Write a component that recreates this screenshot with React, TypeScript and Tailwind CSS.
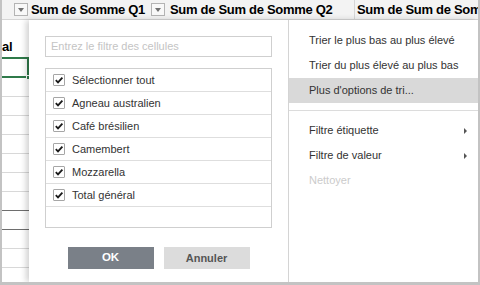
import React from "react";

function Dropdown() {
  return (
    <div className="w-[14px] h-[13px] shrink-0 border border-[#b4b4b4] bg-[#f8f8f8] flex items-center justify-center">
      <div className="w-0 h-0 border-l-[3.5px] border-r-[3.5px] border-t-[4px] border-l-transparent border-r-transparent border-t-[#707070]" />
    </div>
  );
}

function Check() {
  return (
    <div className="w-[12px] h-[12px] shrink-0 border border-[#a6a6a6] rounded-[1px] bg-white flex items-center justify-center">
      <svg width="10" height="10" viewBox="0 0 10 10">
        <path d="M1.8 5.2 L4 7.4 L8.4 2.6" fill="none" stroke="#1a1a1a" strokeWidth="1.8" />
      </svg>
    </div>
  );
}

function MenuItem({ label, arrow, disabled, active }: { label: string; arrow?: boolean; disabled?: boolean; active?: boolean }) {
  return (
    <div
      className={
        "h-[25px] flex items-center pl-[20px] pr-[11px] justify-between " +
        (active ? "bg-[#d9d9d9] " : "") +
        (disabled ? "text-[#cbcbcb]" : "text-[#333333]")
      }
    >
      <span>{label}</span>
      {arrow ? (
        <div className="w-0 h-0 border-t-[3px] border-b-[3px] border-l-[3px] border-t-transparent border-b-transparent border-l-[#555555]" />
      ) : null}
    </div>
  );
}

export default function App() {
  const items = [
    "Sélectionner tout",
    "Agneau australien",
    "Café brésilien",
    "Camembert",
    "Mozzarella",
    "Total général",
  ];
  const rowLines = ["light", "light", "light", "light", "light", "light", "dark", "dark", "light", "light"];
  return (
    <div className="w-[480px] h-[285px] flex flex-col bg-white border-l-2 border-r-2 border-b-[3px] border-[#c3c3c3] overflow-hidden font-['Liberation_Sans',Arial,sans-serif]">
      {/* header row */}
      <div className="h-[20px] shrink-0 flex bg-[#f3f3f3] border-b border-[#d6d6d6] text-[13px] leading-none font-bold text-black tracking-[-0.3px] whitespace-nowrap">
        <div className="w-[27px] shrink-0 flex items-center justify-end pr-[1px]">
          <Dropdown />
        </div>
        <div className="w-[138px] shrink-0 flex items-center justify-between pl-[2px] pr-[2px]">
          <span>Sum de Somme Q1</span>
          <Dropdown />
        </div>
        <div className="w-[188px] shrink-0 flex items-center pl-[3px] border-r border-[#d6d6d6]">
          <span>Sum de Sum de Somme Q2</span>
        </div>
        <div className="flex-1 min-w-0 overflow-hidden flex items-center pl-[2px]">
          <span>Sum de Sum de Somme Q3</span>
        </div>
      </div>

      {/* body */}
      <div className="flex-1 min-h-0 flex">
        {/* spreadsheet column */}
        <div className="w-[27px] shrink-0 flex flex-col">
          <div className="h-[37px] shrink-0 flex items-end pb-[4px] text-[13px] leading-none font-bold text-black tracking-[-0.3px] overflow-hidden">
            al
          </div>
          <div className="relative h-[21px] shrink-0 border-t-2 border-b-2 border-r-2 border-[#2f7a4a]">
            <div className="absolute right-[-4px] bottom-[-4px] w-[5px] h-[5px] bg-[#2f7a4a] border border-white" />
          </div>
          {rowLines.map((k, i) => (
            <div
              key={i}
              className={
                "h-[19px] shrink-0 border-b " + (k === "dark" ? "border-[#6e6e6e]" : "border-[#d8d8d8]")
              }
            />
          ))}
        </div>

        {/* popup */}
        <div className="relative z-10 flex-1 min-w-0 flex bg-white shadow-[-3px_0_6px_rgba(0,0,0,0.18)] text-[11px] leading-none">
          {/* left pane */}
          <div className="w-[260px] shrink-0 border-r border-[#d4d4d4] flex flex-col pt-[16px] px-[16px]">
            <div className="h-[21px] shrink-0 border border-[#cfcfcf] flex items-center pl-[5px] text-[#c4c4c4]">
              Entrez le filtre des cellules
            </div>
            <div className="mt-[11px] h-[160px] shrink-0 border border-[#cfcfcf] flex flex-col">
              {items.map((t) => (
                <div key={t} className="h-[23px] shrink-0 border-b border-[#dedede] flex items-center pl-[7px] gap-[7px] text-[#333333]">
                  <Check />
                  <span>{t}</span>
                </div>
              ))}
            </div>
            <div className="mt-[19px] flex justify-center gap-[10px]">
              <div className="w-[86px] h-[22px] bg-[#7a8088] flex items-center justify-center text-white font-bold text-[11.5px]">
                OK
              </div>
              <div className="w-[86px] h-[22px] bg-[#dcdcdc] flex items-center justify-center text-[#555555] font-bold text-[11px]">
                Annuler
              </div>
            </div>
          </div>

          {/* right pane */}
          <div className="flex-1 min-w-0 flex flex-col pt-[8px]">
            <MenuItem label="Trier le plus bas au plus élevé" />
            <MenuItem label="Trier du plus élevé au plus bas" />
            <MenuItem label="Plus d'options de tri..." active />
            <div className="h-px shrink-0 bg-[#dcdcdc] my-[7px]" />
            <MenuItem label="Filtre étiquette" arrow />
            <MenuItem label="Filtre de valeur" arrow />
            <MenuItem label="Nettoyer" disabled />
          </div>
        </div>
      </div>
    </div>
  );
}
